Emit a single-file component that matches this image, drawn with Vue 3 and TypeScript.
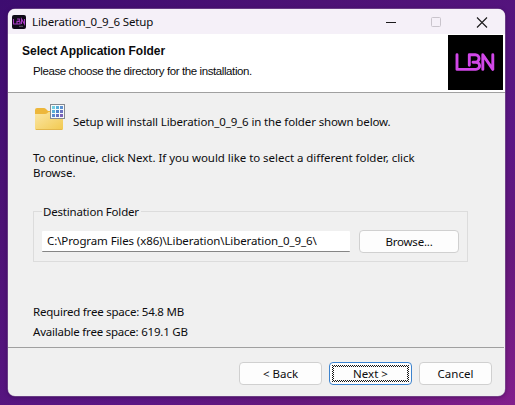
<script setup lang="ts">
import { ref } from 'vue'

const product = 'Liberation_0_9_6'
const folder = ref(`C:\\Program Files (x86)\\Liberation\\${product}\\`)
const cells = [0, 1, 2, 3, 4, 5, 6, 7, 8]
const cellColors = ['#70cfe0', '#58add9', '#5c91d2', '#59afd6', '#4f83c7', '#6a72c0', '#5a8bcf', '#6870c1', '#7b62b8']
</script>

<template>
  <div class="desktop">
    <main class="window">
      <header class="titlebar">
        <svg class="app-icon" width="14" height="14" viewBox="0 0 14 14">
          <rect width="14" height="14" rx="2" fill="#100a18" />
          <path d="M1.500 4v5h3M5 4h2.300v2.200L8 7v2H5V6.400h2M9.500 9V4l3 5V4" fill="none" stroke="#a83bc4" stroke-width="1.1" />
          <path d="M7 11.300h4" stroke="#67616d" stroke-width="1" />
        </svg>
        <span class="title">{{ product }} Setup</span>
        <svg class="controls" width="112" height="24" viewBox="0 0 112 24" fill="none">
          <path d="M0 12.500h10" stroke="#1b1a1c" stroke-width="1.1" />
          <rect x="45.500" y="7.500" width="9" height="9" rx="1" stroke="#c9c4cc" />
          <path d="M91 7.500l10 10M101 7.500l-10 10" stroke="#1b1a1c" stroke-width="1.1" />
        </svg>
      </header>
      <section class="banner">
        <div class="heading">
          <h1>Select Application Folder</h1>
          <p>Please choose the directory for the installation.</p>
        </div>
        <svg class="logo" width="55" height="55" viewBox="0 0 55 55">
          <rect width="55" height="55" fill="#000" />
          <g fill="none" stroke="#d147e8" stroke-width="2.9" stroke-linecap="round" stroke-linejoin="round">
            <path d="M9 19.700v14.700h19a3.600 3.600 0 0 0 0-7.200H25M21.300 30.300V19.700h6a3.700 3.700 0 0 1 0 7.400" />
            <path d="M34.800 34.400V19.700l10 14.700V19.700" />
          </g>
        </svg>
      </section>
      <section class="content">
        <div class="intro">
          <svg class="folder" width="32" height="28" viewBox="0 0 32 28">
            <defs>
              <linearGradient id="paper" x1="0" y1="0" x2="1" y2="1">
                <stop offset="0" stop-color="#fbe7a6" />
                <stop offset="1" stop-color="#f2c94f" />
              </linearGradient>
            </defs>
            <path d="M1 6q0-2 2-2h7q1 0 2 1l2 2h13q2 0 2 2v8H1z" fill="#edb73b" />
            <path d="M1 10h10q1.500 0 2.500-1l1-1H27q2 0 2 2v15q0 1-1 1H2q-1 0-1-1z" fill="url(#paper)" />
            <path d="M2 25.500h26" stroke="#e3b74c" />
            <rect x="16.500" y=".5" width="14" height="14" fill="#f6fafc" stroke="#858990" />
            <rect v-for="n in cells" :key="n" :x="18 + (n % 3) * 4" :y="2 + Math.floor(n / 3) * 4" width="3" height="3" :fill="cellColors[n]" />
          </svg>
          <span class="intro-text">Setup will install {{ product }} in the folder shown below.</span>
        </div>
        <p class="instructions">
          To continue, click Next. If you would like to select a different folder, click<br />
          Browse.
        </p>
        <fieldset class="group">
          <legend><span>Destination Folder</span></legend>
          <div class="picker">
            <input v-model="folder" type="text" spellcheck="false" />
            <button class="browse" type="button">Browse...</button>
          </div>
        </fieldset>
        <div class="space">
          <span>Required free space: 54.8 MB</span>
          <span>Available free space: 619.1 GB</span>
        </div>
      </section>
      <footer class="actions">
        <button type="button">&lt; Back</button>
        <button class="default" type="button">
          Next &gt;
          <svg class="focus" width="77" height="17" viewBox="0 0 77 17">
            <defs>
              <pattern id="dots" width="2" height="2" patternUnits="userSpaceOnUse">
                <path d="M0 0h1v1H0zM1 1h1v1H1z" fill="#151515" />
              </pattern>
            </defs>
            <path d="M0 0h77v17H0zM2 2v13h73V2z" fill="url(#dots)" fill-rule="evenodd" shape-rendering="crispEdges" />
          </svg>
        </button>
        <button class="cancel" type="button">Cancel</button>
      </footer>
    </main>
  </div>
</template>

<style>
body {
  margin: 0;
  overflow: hidden;
}
</style>

<style scoped>
* {
  box-sizing: border-box;
}
.desktop {
  width: 515px;
  height: 405px;
  padding: 9px 10px 9px 8px;
  background: linear-gradient(145deg, #3d0c70 0%, #4d1275 30%, #5b1685 65%, #65187c 80%, #821e8c 100%);
  font-family: "Noto Sans", "Open Sans", sans-serif;
  font-size: 11.5px;
  color: #0c0c0e;
}
.window {
  display: flex;
  flex-direction: column;
  height: 387px;
  width: 497px;
  overflow: hidden;
  border-radius: 7px;
  background: #f0f0f0;
  box-shadow: 0 0 0 0.5px #8c6aa0, 0 1px 4px #25063b88;
}
.titlebar {
  display: flex;
  height: 25px;
  flex: none;
  align-items: center;
  padding-left: 4px;
  background: #f5f0f8;
}
.title {
  margin-left: 6px;
  line-height: 25px;
  letter-spacing: -0.12px;
  white-space: nowrap;
}
.controls {
  margin-left: auto;
  margin-right: 7px;
}
.banner {
  display: flex;
  justify-content: space-between;
  flex: none;
  height: 59px;
  padding: 1px 2px 0 14px;
  border-bottom: 1px solid #a0a0a0;
  background: #fff;
  font-family: "Liberation Sans", Arial, sans-serif;
}
.heading {
  padding-top: 8px;
}
h1 {
  margin: 0;
  font-size: 12px;
  line-height: 16px;
  letter-spacing: -0.02px;
  white-space: nowrap;
}
.heading p {
  margin: 4px 0 0 11px;
  font-size: 11.5px;
  line-height: 16px;
  letter-spacing: -0.4px;
  white-space: nowrap;
}
.content {
  height: 254px;
  padding: 10px 0 0 25px;
  white-space: nowrap;
}
.intro {
  display: flex;
  height: 30px;
  gap: 7px;
}
.intro-text {
  padding-top: 11px;
  line-height: 16px;
  letter-spacing: -0.125px;
}
.folder {
  margin-left: 1px;
  margin-top: 1px;
}
.instructions {
  margin: 17px 0 0;
  line-height: 15px;
  letter-spacing: -0.04px;
}
.group {
  width: 435px;
  height: 59px;
  margin: 23px 0 0;
  padding: 11px 8px 0;
  border: 1px solid #dcdcdc;
  min-width: 0;
}
legend {
  height: 16px;
  padding: 1px 2px 0 1px;
  line-height: 16px;
  letter-spacing: -0.2px;
}
.picker {
  display: flex;
  gap: 9px;
  align-items: center;
}
input {
  width: 308px;
  height: 21px;
  padding: 0 5px 1px;
  border: 0;
  border-bottom: 1px solid #868686;
  border-radius: 1px;
  outline: 0;
  background: #fff;
  color: inherit;
  font: inherit;
  letter-spacing: -0.11px;
}
button {
  position: relative;
  width: 83px;
  height: 23px;
  padding: 0;
  border: 1px solid #d0d0d0;
  border-radius: 4px;
  background: #fdfdfd;
  color: #0c0c0e;
  font: inherit;
  line-height: 20px;
}
.browse {
  width: 100px;
  letter-spacing: -0.2px;
}
.space {
  display: grid;
  margin-top: 40px;
  line-height: 20px;
  letter-spacing: -0.22px;
}
.actions {
  display: flex;
  flex: 1;
  justify-content: flex-end;
  align-items: flex-start;
  gap: 7px;
  margin-right: 1px;
  padding: 14px 12px 0 0;
  border-top: 1px solid #a0a0a0;
}
.default {
  border-color: #3c83ce;
}
.focus {
  position: absolute;
  top: 2px;
  left: 2px;
}
.cancel {
  width: 73px;
}
</style>
